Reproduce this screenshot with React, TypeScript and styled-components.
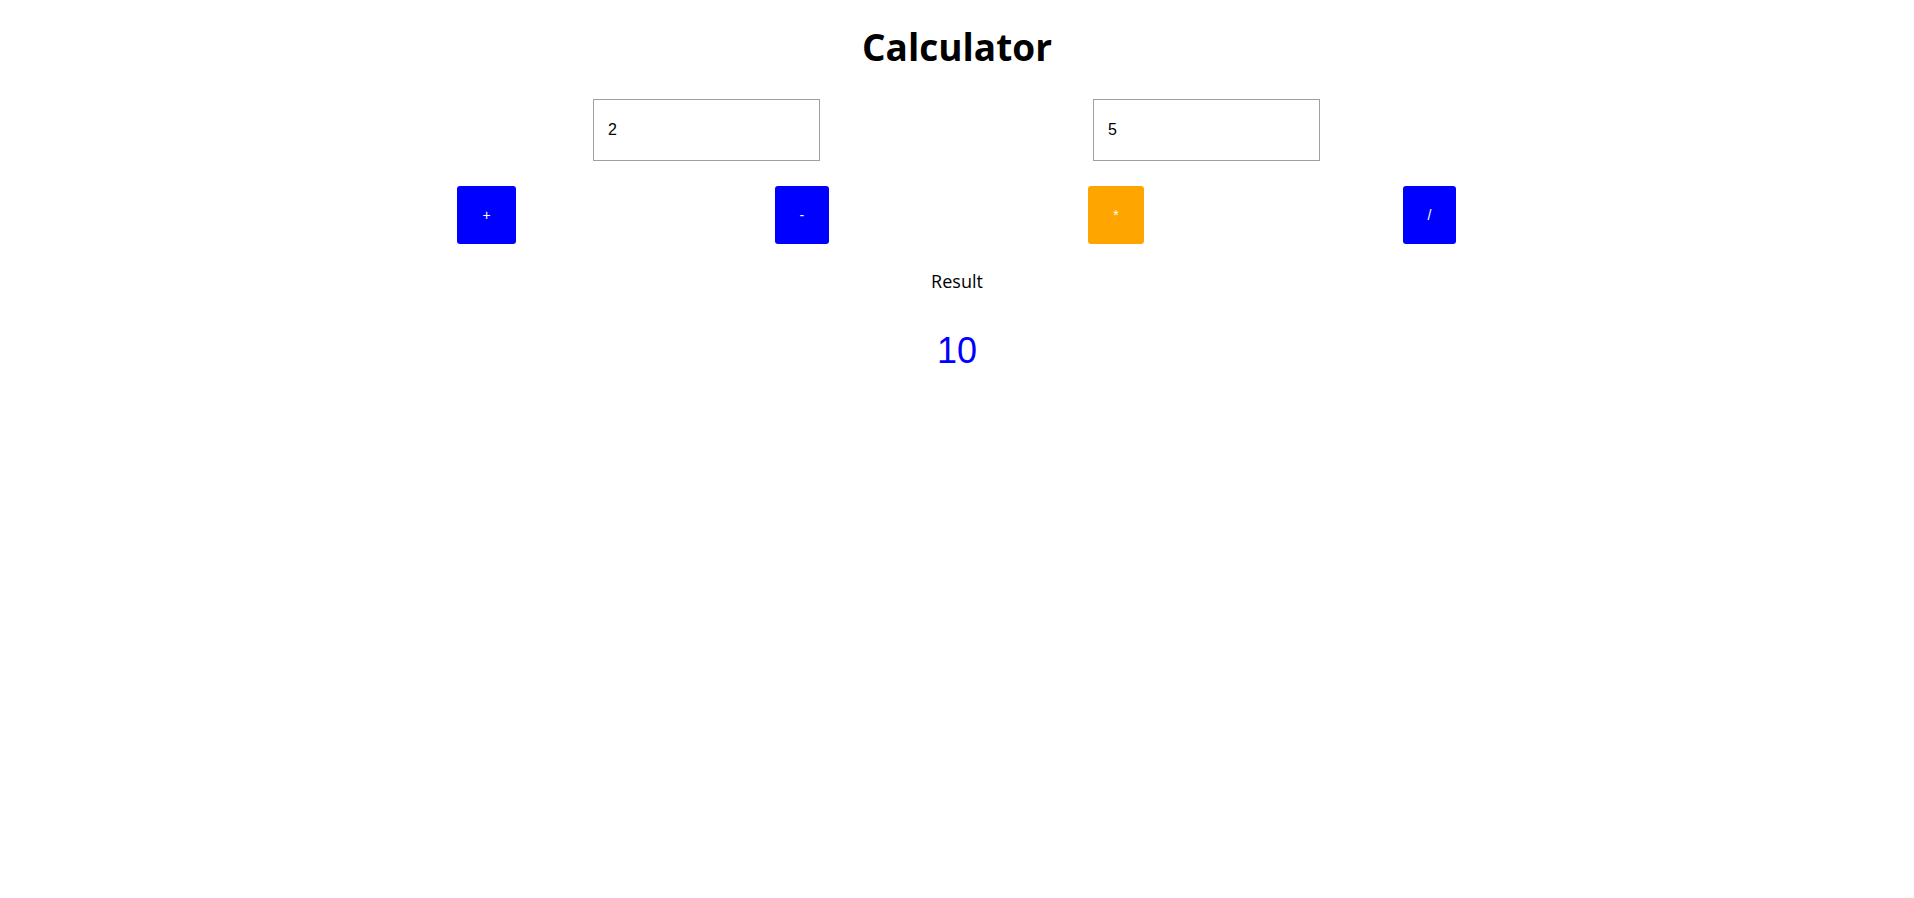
import React, { useState } from "react";
import styled, { createGlobalStyle } from "styled-components";

const GlobalStyle = createGlobalStyle`
  html, body {
    margin: 0;
    padding: 0;
    background: #ffffff;
  }
  body {
    font-family: "Open Sans", "DejaVu Sans", sans-serif;
    color: #000;
  }
`;

const Page = styled.div`
  display: flex;
  flex-direction: column;
  align-items: center;
  padding-top: 25px;
`;

const Title = styled.h1`
  margin: 0;
  font-family: "Open Sans", "DejaVu Sans", sans-serif;
  font-weight: 700;
  font-size: 37px;
  line-height: 44px;
  color: #000;
`;

const InputRow = styled.div`
  display: flex;
  justify-content: center;
  gap: 273px;
  margin-top: 30px;
  padding-right: 1px;
`;

const NumberInput = styled.input`
  box-sizing: border-box;
  width: 227px;
  height: 62px;
  border: 1px solid #a0a0a0;
  padding: 0 14px;
  font-family: "Liberation Sans", Arial, sans-serif;
  font-size: 16px;
  color: #000;
  outline: none;
  background: #fff;
`;

const ButtonRow = styled.div`
  width: 1258px;
  display: flex;
  justify-content: space-around;
  margin-top: 25px;
`;

const OpButton = styled.button<{ $active: boolean }>`
  height: 58px;
  padding: 0 25px;
  border: none;
  border-radius: 3px;
  background: ${(p) => (p.$active ? "#ffa500" : "#0000ff")};
  color: #ffffff;
  font-family: "Liberation Sans", Arial, sans-serif;
  font-size: 14px;
  cursor: pointer;
`;

const ResultLabel = styled.div`
  margin-top: 25px;
  font-family: "Open Sans", "DejaVu Sans", sans-serif;
  font-size: 18px;
  line-height: 24px;
`;

const ResultValue = styled.div`
  margin-top: 38px;
  font-family: "Liberation Sans", Arial, sans-serif;
  font-size: 36px;
  line-height: 40px;
  color: #0000ff;
`;

const ops = ["+", "-", "*", "/"] as const;
type Op = (typeof ops)[number];

function compute(a: number, b: number, op: Op): number {
  switch (op) {
    case "+":
      return a + b;
    case "-":
      return a - b;
    case "*":
      return a * b;
    case "/":
      return a / b;
  }
}

export default function App() {
  const [a, setA] = useState("2");
  const [b, setB] = useState("5");
  const [op, setOp] = useState<Op>("*");
  const result = compute(Number(a), Number(b), op);

  return (
    <>
      <GlobalStyle />
      <Page>
        <Title>Calculator</Title>
        <InputRow>
          <NumberInput value={a} onChange={(e) => setA(e.target.value)} />
          <NumberInput value={b} onChange={(e) => setB(e.target.value)} />
        </InputRow>
        <ButtonRow>
          {ops.map((o) => (
            <OpButton key={o} $active={o === op} onClick={() => setOp(o)}>
              {o}
            </OpButton>
          ))}
        </ButtonRow>
        <ResultLabel>Result</ResultLabel>
        <ResultValue>{result}</ResultValue>
      </Page>
    </>
  );
}
